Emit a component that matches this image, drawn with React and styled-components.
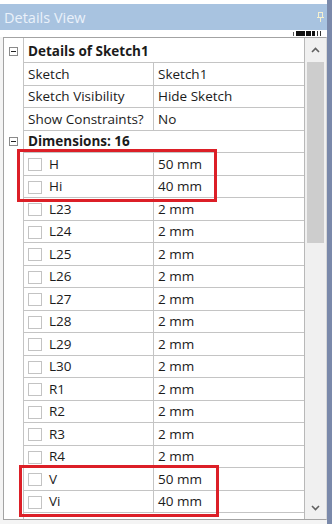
import React from "react";
import styled, { createGlobalStyle } from "styled-components";

const GlobalStyle = createGlobalStyle`
  html, body {
    margin: 0;
    padding: 0;
    background: #fff;
  }
  * { box-sizing: border-box; }
`;

const Frame = styled.div`
  width: 332px;
  height: 524px;
  display: flex;
  flex-direction: column;
  background: #f4f4f4;
  border-right: 5px solid #7a89aa;
  font-family: "Open Sans", "Noto Sans", sans-serif;
  overflow: hidden;
`;

const TopGap = styled.div`
  height: 4px;
  background: #fff;
`;

const TitleBar = styled.div`
  height: 26px;
  background: #a8c3e0;
  display: flex;
  align-items: center;
  justify-content: space-between;
  padding: 0 3px 0 4px;
  color: #eaf1fa;
  font-size: 14.5px;
`;

const ToolStrip = styled.div`
  height: 7px;
  background: #fff;
  display: flex;
  justify-content: flex-end;
  align-items: flex-end;
  padding: 0 4px 1px 0;
`;

const Body = styled.div`
  margin-left: 3px;
  height: 483px;
  display: flex;
  border: 1px solid #a3a3a3;
  border-right-color: #d8d8d8;
  background: #fff;
  overflow: hidden;
`;

const Table = styled.div`
  width: 301px;
  padding-top: 2.5px;
  border-right: 1px solid #b8b8b8;
  display: flex;
  flex-direction: column;
  background: linear-gradient(to right, #fff 19px, #c4c4c4 19px, #c4c4c4 20px, #fff 20px);
`;

const Row = styled.div`
  height: 22.5px;
  flex: none;
  display: flex;
  font-size: 13.5px;
  color: #1b1b1b;
`;

const Gutter = styled.div`
  width: 20px;
  flex: none;
  display: flex;
  align-items: center;
  justify-content: center;
  padding-right: 1px;
`;

const Cell = styled.div`
  display: flex;
  align-items: center;
  border-bottom: 1px solid #c4c4c4;
  width: ${(p) => p.$w}px;
  flex: ${(p) => (p.$w ? "none" : "1")};
  padding-left: 4px;
  white-space: nowrap;
  font-weight: ${(p) => (p.$bold ? 700 : 400)};
  & + & {
    border-left: 1px solid #c4c4c4;
  }
`;

const Toggle = styled.span`
  width: 9px;
  height: 9px;
  border: 1px solid #8a8a8a;
  background: #fff;
  display: flex;
  align-items: center;
  justify-content: center;
  &::after {
    content: "";
    width: 5px;
    height: 1px;
    background: #222;
  }
`;

const Check = styled.span`
  width: 14px;
  height: 13px;
  border: 1px solid #c3c3c3;
  background: #fff;
  margin: 2px 7px 0 0;
  flex: none;
`;

const Group = styled.div`
  position: relative;
  display: flex;
  flex-direction: column;
`;

const Mark = styled.span`
  position: absolute;
  left: ${(p) => p.$left}px;
  width: 200px;
  top: ${(p) => p.$top}px;
  bottom: -4px;
  border: 3px solid #dc1f27;
  pointer-events: none;
`;

const ScrollBar = styled.div`
  width: 21px;
  background: #f0f0f0;
  display: flex;
  flex-direction: column;
  align-items: center;
`;

const Arrow = styled.div`
  height: ${(p) => p.$h}px;
  width: 100%;
  display: flex;
  align-items: center;
  justify-content: center;
  flex: none;
`;

const Thumb = styled.div`
  width: 17px;
  height: 181px;
  background: #cdcdcd;
  flex: none;
`;

const Track = styled.div`
  flex: 1;
`;

const Pin = () => (
  <svg width="7" height="10" viewBox="0 0 7 10">
    <rect x="1.5" y="0.5" width="4" height="5" fill="none" stroke="#f4f0d0" />
    <rect x="0" y="5" width="7" height="1" fill="#f4f0d0" />
    <rect x="3" y="6" width="1" height="4" fill="#f4f0d0" />
  </svg>
);

const Tools = () => (
  <svg width="30" height="5" viewBox="0 0 30 5">
    <rect x="0" y="1" width="1" height="4" fill="#555" />
    <rect x="3" y="0" width="9" height="5" fill="#111" />
    <rect x="13" y="0" width="5" height="5" fill="#111" />
    <rect x="19" y="0" width="3" height="5" fill="#111" />
    <rect x="24" y="0" width="1" height="5" fill="#333" />
    <rect x="27" y="0" width="1" height="5" fill="#333" />
  </svg>
);

const Chevron = ({ down }) => (
  <svg width="9" height="6" viewBox="0 0 9 6">
    <path
      d={down ? "M1 1 L4.5 4.5 L8 1" : "M1 5 L4.5 1.5 L8 5"}
      fill="none"
      stroke="#606060"
      strokeWidth="1.6"
    />
  </svg>
);

const Category = ({ label }) => (
  <Row>
    <Gutter>
      <Toggle />
    </Gutter>
    <Cell $bold>{label}</Cell>
  </Row>
);

const Prop = ({ name, value }) => (
  <Row>
    <Gutter />
    <Cell $w={129}>{name}</Cell>
    <Cell>{value}</Cell>
  </Row>
);

const Dim = ({ name, value }) => (
  <Row>
    <Gutter />
    <Cell $w={129}>
      <Check />
      {name}
    </Cell>
    <Cell>{value}</Cell>
  </Row>
);

const lengths = ["L23", "L24", "L25", "L26", "L27", "L28", "L29", "L30", "R1", "R2", "R3", "R4"];

export default function App() {
  return (
    <>
      <GlobalStyle />
      <Frame>
        <TopGap />
        <TitleBar>
          <span>Details View</span>
          <Pin />
        </TitleBar>
        <ToolStrip>
          <Tools />
        </ToolStrip>
        <Body>
          <Table>
            <Category label="Details of Sketch1" />
            <Prop name="Sketch" value="Sketch1" />
            <Prop name="Sketch Visibility" value="Hide Sketch" />
            <Prop name="Show Constraints?" value="No" />
            <Category label="Dimensions: 16" />
            <Group>
              <Dim name="H" value="50 mm" />
              <Dim name="Hi" value="40 mm" />
              <Mark $left={13} $top={-4} />
            </Group>
            {lengths.map((n) => (
              <Dim key={n} name={n} value="2 mm" />
            ))}
            <Group>
              <Dim name="V" value="50 mm" />
              <Dim name="Vi" value="40 mm" />
              <Mark $left={15} $top={-3} />
            </Group>
          </Table>
          <ScrollBar>
            <Arrow $h={24}>
              <Chevron />
            </Arrow>
            <Thumb />
            <Track />
            <Arrow $h={22}>
              <Chevron down />
            </Arrow>
          </ScrollBar>
        </Body>
      </Frame>
    </>
  );
}
